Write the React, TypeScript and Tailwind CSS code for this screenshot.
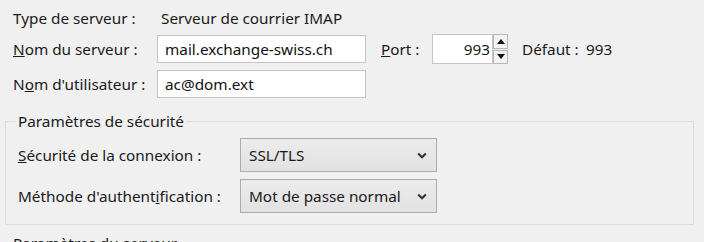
const font = "[font-family:'Noto_Sans','Open_Sans',sans-serif]";

const Field = ({ value, width }: { value: string; width: string }) => (
  <div
    className={`${width} h-[28px] bg-white border border-[#c4c4c4] flex items-center px-[7px] text-[#111]`}
  >
    {value}
  </div>
);

const Select = ({ value }: { value: string }) => (
  <div className="w-[197px] h-[34px] bg-gradient-to-b from-[#ececec] to-[#e2e2e2] border border-[#acacac] flex items-center justify-between pl-[8px] pr-[9px]">
    <span>{value}</span>
    <svg width="10" height="7" viewBox="0 0 10 7">
      <path d="M1.2 1.5 L5 5.2 L8.8 1.5" fill="none" stroke="#333" strokeWidth="2.2" />
    </svg>
  </div>
);

const Spinner = () => (
  <div className="flex flex-col w-[15px] h-[30px] gap-[1px]">
    <div className="flex-1 bg-[#f3f3f3] border border-[#b8b8b8] flex items-center justify-center">
      <svg width="8" height="5" viewBox="0 0 8 5">
        <path d="M0 5 L4 0 L8 5 Z" fill="#111" />
      </svg>
    </div>
    <div className="flex-1 bg-[#f3f3f3] border border-[#b8b8b8] flex items-center justify-center">
      <svg width="8" height="5" viewBox="0 0 8 5">
        <path d="M0 0 L4 5 L8 0 Z" fill="#111" />
      </svg>
    </div>
  </div>
);

export default () => {
  return (
    <div
      className={`w-[704px] h-[242px] overflow-hidden bg-[#f0f0f0] text-[15.3px] text-[#1a1a1a] ${font}`}
    >
      <div className="pl-[13px]">
        <div className="h-[24px] mt-[6px] flex items-center">
          <span className="w-[148px]">Type de serveur :</span>
          <span>Serveur de courrier IMAP</span>
        </div>
        <div className="h-[30px] mt-[4px] flex items-center">
          <span className="w-[144px]">
            <u>N</u>om du serveur :
          </span>
          <Field value="mail.exchange-swiss.ch" width="w-[209px]" />
          <span className="ml-[15px] w-[51px]">
            <u>P</u>ort :
          </span>
          <div className="w-[61px] h-[30px] bg-white border border-[#c4c4c4] flex items-center justify-end pr-[2px]">
            993
          </div>
          <Spinner />
          <span className="ml-[14px] w-[64px]">Défaut :</span>
          <span>993</span>
        </div>
        <div className="h-[28px] mt-[6px] flex items-center">
          <span className="w-[144px]">
            N<u>o</u>m d'utilisateur :
          </span>
          <Field value="ac@dom.ext" width="w-[209px]" />
        </div>
      </div>

      <fieldset className="mx-[5px] mt-[13px] w-[689px] border border-[#dcdcdc] pl-[12px] pb-[11px]">
        <legend className="ml-[-2px] px-[2px] leading-[20px]">
          Paramètres de sécurité
        </legend>
        <div className="mt-[7px] flex flex-col gap-[7px]">
          <div className="flex items-center">
            <span className="w-[222px]">
              <u>S</u>écurité de la connexion :
            </span>
            <Select value="SSL/TLS" />
          </div>
          <div className="flex items-center">
            <span className="w-[222px]">
              Méthode d'authent<u>i</u>fication :
            </span>
            <Select value="Mot de passe normal" />
          </div>
        </div>
      </fieldset>

      <div className="pl-[13px] mt-[8px] leading-[20px]">Paramètres du serveur</div>
    </div>
  );
};
